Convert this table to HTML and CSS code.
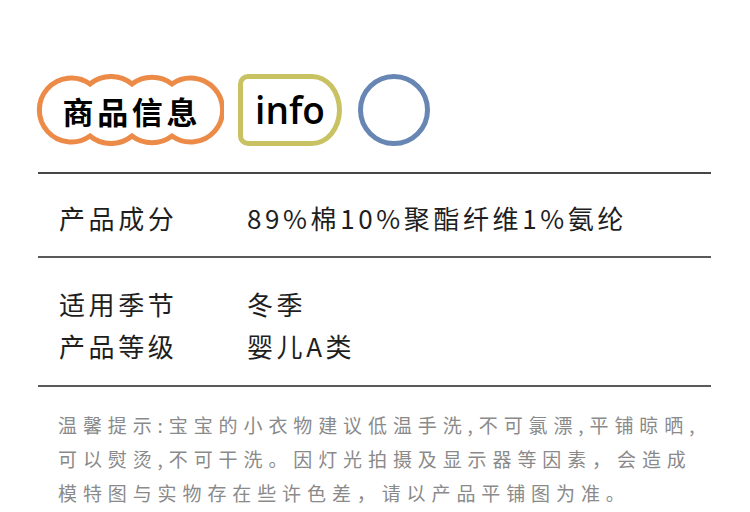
FILE: index.html
```html
<!DOCTYPE html>
<html lang="zh-CN">
<head>
<meta charset="utf-8">
<link rel="stylesheet" href="styles.css">
</head>
<body>
<div class="page">
  <div class="header">
    <div class="cloud">
      <svg class="cloud-shape" width="188" height="72" viewBox="36 74 188 72">
        <path d="M90,84 A33,33 0 0 1 132,84 A33,33 0 0 1 172,84 A32,32 0 1 1 172,136 A33,33 0 0 1 132,136 A33,33 0 0 1 90,136 A32,32 0 1 1 90,84 Z" fill="#fff" stroke="#ec8a48" stroke-width="5"/>
      </svg>
      <span class="cloud-text">商品信息</span>
    </div>
    <div class="info-tag">info</div>
    <div class="ring"></div>
  </div>

  <div class="specs">
    <div class="group group-one">
      <div class="row"><span class="label">产品成分</span><span class="value">89%棉10%聚酯纤维1%氨纶</span></div>
    </div>
    <div class="group group-two">
      <div class="row"><span class="label">适用季节</span><span class="value">冬季</span></div>
      <div class="row"><span class="label">产品等级</span><span class="value">婴儿A类</span></div>
    </div>
  </div>

  <p class="note">温馨提示:宝宝的小衣物建议低温手洗,不可氯漂,平铺晾晒,<br>可以熨烫,不可干洗。因灯光拍摄及显示器等因素，会造成<br>模特图与实物存在些许色差，请以产品平铺图为准。</p>
</div>
</body>
</html>
```

FILE: styles.css
```css
html, body {
  margin: 0;
  padding: 0;
  background: #fff;
}

body {
  font-family: "Noto Sans CJK SC", "Noto Sans", sans-serif;
  color: #222;
}

.page {
  width: 750px;
  height: 512px;
  overflow: hidden;
}

.header {
  display: flex;
  align-items: center;
  padding: 74px 0 0 36px;
}

.cloud {
  display: grid;
  width: 188px;
  height: 72px;
}

.cloud-shape,
.cloud-text {
  grid-area: 1 / 1;
}

.cloud-text {
  align-self: center;
  justify-self: center;
  font-size: 31px;
  font-weight: 700;
  color: #000;
  letter-spacing: 3.6px;
  margin-right: -3.6px;
  line-height: 1;
  padding-top: 1px;
}

.info-tag {
  box-sizing: border-box;
  width: 104px;
  height: 72px;
  margin-left: 14px;
  border: 5px solid #c8c262;
  border-radius: 10px 30px 30px 10px / 10px 36px 36px 10px;
  display: flex;
  align-items: center;
  justify-content: center;
  font-family: "Open Sans", "Noto Sans", sans-serif;
  font-weight: 600;
  font-size: 37px;
  color: #000;
  line-height: 1;
  padding-bottom: 2px;
}

.ring {
  box-sizing: border-box;
  width: 72px;
  height: 72px;
  margin-left: 16px;
  border: 5px solid #6786b3;
  border-radius: 50%;
}

.specs {
  margin: 26px 0 0 38px;
  width: 673px;
  border-top: 2px solid #474747;
}

.group {
  border-bottom: 2px solid #5a5a5a;
}

.group-one {
  padding: 23px 0 17px;
}

.group-two {
  padding: 25px 0 18px;
}

.row {
  display: grid;
  grid-template-columns: 188px 1fr;
  padding-left: 21px;
  font-size: 26px;
  line-height: 42px;
  letter-spacing: 3.6px;
  color: #1e1e1e;
}

.note {
  margin: 21px 0 0 58px;
  font-size: 19px;
  line-height: 34px;
  letter-spacing: 5.9px;
  color: #8a8a8a;
  white-space: nowrap;
}
```
